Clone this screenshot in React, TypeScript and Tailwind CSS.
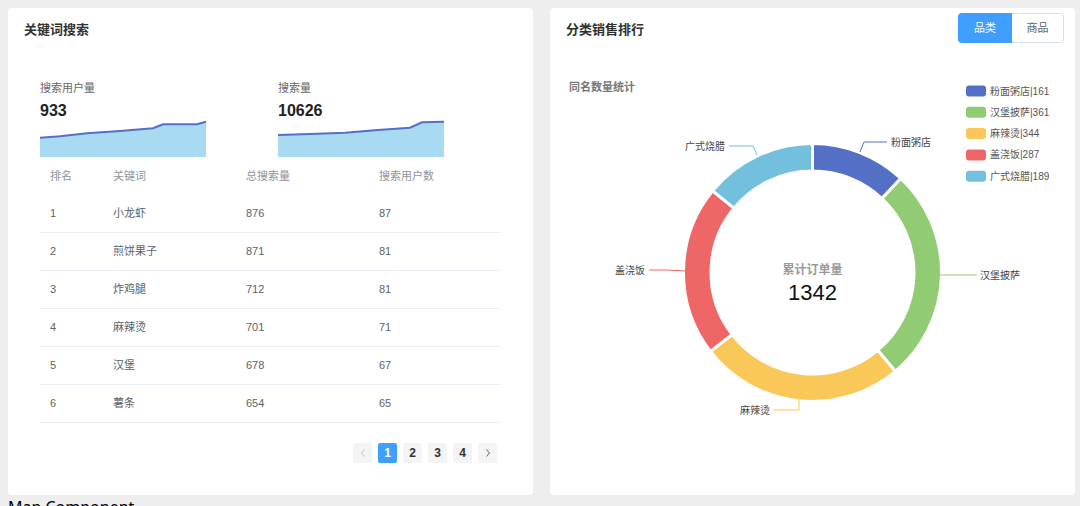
import React from 'react';

const keywords = [
  { rank: 1, word: '小龙虾', total: 876, users: 87 },
  { rank: 2, word: '煎饼果子', total: 871, users: 81 },
  { rank: 3, word: '炸鸡腿', total: 712, users: 81 },
  { rank: 4, word: '麻辣烫', total: 701, users: 71 },
  { rank: 5, word: '汉堡', total: 678, users: 67 },
  { rank: 6, word: '薯条', total: 654, users: 65 },
];

const categories = [
  { name: '粉面粥店', value: 161, color: '#5470c6' },
  { name: '汉堡披萨', value: 361, color: '#91cc75' },
  { name: '麻辣烫', value: 344, color: '#fac858' },
  { name: '盖浇饭', value: 287, color: '#ee6666' },
  { name: '广式烧腊', value: 189, color: '#73c0de' },
];

const FONT = 'Liberation Sans, Noto Sans CJK SC, sans-serif';

function Sparkline({ points }: { points: [number, number][] }) {
  const line = points.map(([x, y], i) => `${i ? 'L' : 'M'}${x} ${y}`).join(' ');
  return (
    <svg width="166" height="37" className="block">
      <path d={`${line} L166 37 L0 37 Z`} fill="#a8daf1" />
      <path d={line} fill="none" stroke="#5470c6" strokeWidth="2" />
    </svg>
  );
}

function Stat({ label, value, points }: { label: string; value: string; points: [number, number][] }) {
  return (
    <div className="w-[238px] shrink-0">
      <div className="text-[11px] leading-4 text-[#666]">{label}</div>
      <div className="mt-[5px] text-[16px] leading-[19px] font-bold text-[#222]">{value}</div>
      <Sparkline points={points} />
    </div>
  );
}

function Chevron({ dir }: { dir: 'left' | 'right' }) {
  return (
    <svg width="8" height="10" viewBox="0 0 8 10">
      <polyline
        points={dir === 'left' ? '5.5,1.5 2.5,5 5.5,8.5' : '2.5,1.5 5.5,5 2.5,8.5'}
        fill="none"
        stroke="currentColor"
        strokeWidth="1"
      />
    </svg>
  );
}

function KeywordCard() {
  return (
    <div className="w-[525px] h-[487px] shrink-0 bg-white rounded-[4px] font-['Liberation_Sans','Noto_Sans_CJK_SC',sans-serif]">
      <div className="px-4 pt-[14px] text-[13px] leading-4 font-bold text-[#303133]">关键词搜索</div>

      <div className="mt-[42px] flex px-8">
        <Stat
          label="搜索用户量"
          value="933"
          points={[[0, 17.7], [20, 16.3], [47, 13.3], [80, 11], [113, 8.3], [123, 4.3], [157, 4.3], [166, 1.7]]}
        />
        <Stat
          label="搜索量"
          value="10626"
          points={[[0, 15], [32, 14], [67, 12.7], [100, 10], [132, 7.7], [144, 2.3], [166, 1.7]]}
        />
      </div>

      {/* 关键词表格 */}
      <div className="mx-8 text-[11px] text-[#606266]">
        <div className="grid grid-cols-[63px_133px_133px_1fr] h-[38px] items-center text-[#909399]">
          <div className="pl-[10px]">排名</div>
          <div className="pl-[10px]">关键词</div>
          <div className="pl-[10px]">总搜索量</div>
          <div className="pl-[10px]">搜索用户数</div>
        </div>
        {keywords.map(({ rank, word, total, users }) => (
          <div
            key={rank}
            className="grid grid-cols-[63px_133px_133px_1fr] h-[38px] items-center border-b border-[#ebeef5]"
          >
            <div className="pl-[10px]">{rank}</div>
            <div className="pl-[10px]">{word}</div>
            <div className="pl-[10px]">{total}</div>
            <div className="pl-[10px]">{users}</div>
          </div>
        ))}
      </div>

      <div className="mt-5 pr-9 flex justify-end gap-[6px] text-[12px] font-bold">
        <div className="w-[19px] h-[20px] rounded-[2px] bg-[#f4f4f5] text-[#c0c4cc] flex items-center justify-center">
          <Chevron dir="left" />
        </div>
        {[1, 2, 3, 4].map((n) => (
          <div
            key={n}
            className={
              n === 1
                ? 'w-[19px] h-[20px] rounded-[2px] bg-[#409eff] text-white flex items-center justify-center'
                : 'w-[19px] h-[20px] rounded-[2px] bg-[#f4f4f5] text-[#303133] flex items-center justify-center'
            }
          >
            {n}
          </div>
        ))}
        <div className="w-[19px] h-[20px] rounded-[2px] bg-[#f4f4f5] text-[#606266] flex items-center justify-center">
          <Chevron dir="right" />
        </div>
      </div>
    </div>
  );
}

// donut geometry, in page coordinates
const cx = 812.5;
const cy = 272.5;
const R = 129;
const r = 101.5;

function pt(rad: number, a: number) {
  const t = (a * Math.PI) / 180;
  return [cx + rad * Math.sin(t), cy - rad * Math.cos(t)];
}

function arc(a0: number, a1: number) {
  const large = a1 - a0 > 180 ? 1 : 0;
  const [x0, y0] = pt(R, a0);
  const [x1, y1] = pt(R, a1);
  const [x2, y2] = pt(r, a1);
  const [x3, y3] = pt(r, a0);
  return `M${x0} ${y0} A${R} ${R} 0 ${large} 1 ${x1} ${y1} L${x2} ${y2} A${r} ${r} 0 ${large} 0 ${x3} ${y3} Z`;
}

const labels = [
  { line: '860,152 864,142 887,142', x: 891, y: 142, anchor: 'start' },
  { line: '940,275 960,275 977,275', x: 980, y: 275, anchor: 'start' },
  { line: '799,399 799,410 773,410', x: 770, y: 410, anchor: 'end' },
  { line: '685,271 667,270 649,270', x: 645, y: 270, anchor: 'end' },
  { line: '757,155 753,146 729,146', x: 725, y: 146, anchor: 'end' },
];

function DonutChart() {
  const total = categories.reduce((s, c) => s + c.value, 0);
  let acc = 0;
  const slices = categories.map((c) => {
    const a0 = (acc / total) * 360;
    acc += c.value;
    return { ...c, a0, a1: (acc / total) * 360 };
  });

  return (
    <svg width="525" height="452" className="block" fontFamily={FONT}>
      <g transform="translate(-550,-43)">
        <text x="569" y="87" dominantBaseline="central" fontSize="11" fontWeight="bold" fill="#777">
          同名数量统计
        </text>

        {categories.map((c, i) => {
          const y = 91 + i * 21.3;
          return (
            <g key={c.name}>
              <rect x="966" y={y - 5.5} width="20" height="11" rx="3" fill={c.color} />
              <text x="990" y={y} dominantBaseline="central" fontSize="10" fill="#555">
                {c.name}|{c.value}
              </text>
            </g>
          );
        })}

        {slices.map((s) => (
          <path key={s.name} d={arc(s.a0, s.a1)} fill={s.color} stroke="#fff" strokeWidth="3" />
        ))}

        {slices.map((s, i) => (
          <g key={s.name}>
            <polyline points={labels[i].line} fill="none" stroke={s.color} strokeWidth="1" />
            <text
              x={labels[i].x}
              y={labels[i].y}
              dominantBaseline="central"
              textAnchor={labels[i].anchor as 'start' | 'end'}
              fontSize="10"
              fill="#444"
            >
              {s.name}
            </text>
          </g>
        ))}

        <text x={cx} y="270" textAnchor="middle" dominantBaseline="central" fontSize="12" fontWeight="bold" fill="#999">
          累计订单量
        </text>
        <text x={cx} y="292" textAnchor="middle" dominantBaseline="central" fontSize="22" fill="#111">
          {total}
        </text>
      </g>
    </svg>
  );
}

function CategoryCard() {
  return (
    <div className="w-[525px] h-[487px] shrink-0 bg-white rounded-[4px] font-['Liberation_Sans','Noto_Sans_CJK_SC',sans-serif]">
      <div className="flex justify-between items-start pl-4 pr-[11px] h-[35px]">
        <div className="pt-[14px] text-[13px] leading-4 font-bold text-[#303133]">分类销售排行</div>
        <div className="mt-[5px] flex h-[30px] text-[11px]">
          <div className="w-[54px] flex items-center justify-center bg-[#409eff] text-white rounded-l-[4px]">品类</div>
          <div className="w-[52px] flex items-center justify-center text-[#606266] border border-l-0 border-[#dcdfe6] rounded-r-[4px]">
            商品
          </div>
        </div>
      </div>
      <DonutChart />
    </div>
  );
}

export default function App() {
  return (
    <div className="min-h-screen bg-[#eeeeee]">
      <div className="flex gap-[17px] px-2 pt-2">
        <KeywordCard />
        <CategoryCard />
      </div>
      <div className="px-2 text-base text-black">Map Component</div>
    </div>
  );
}
